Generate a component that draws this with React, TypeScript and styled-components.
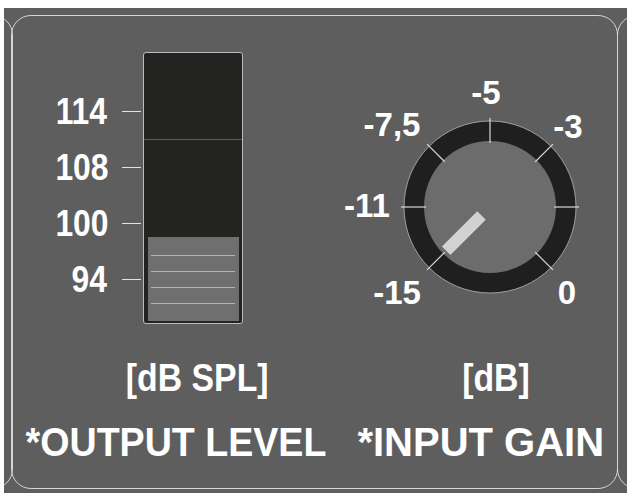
import React from "react";
import styled, { createGlobalStyle } from "styled-components";

const Global = createGlobalStyle`
  html, body { margin: 0; padding: 0; background: #ffffff; }
  body { width: 633px; height: 499px; overflow: hidden; }
  #root { width: 633px; height: 499px; }
`;

const FONT = `"Liberation Sans", Arial, sans-serif`;

const Frame = styled.div`
  box-sizing: border-box;
  margin: 8px 0 0 4px;
  width: 623px;
  height: 485px;
  background: #5e5e5e;
  overflow: hidden;
  display: flex;
  align-items: flex-start;
  padding-top: 7px;
`;

const PanelShell = styled.div<{ $w: number; $ml: number }>`
  box-sizing: border-box;
  flex: 0 0 auto;
  width: ${(p) => p.$w}px;
  height: 474px;
  margin-left: ${(p) => p.$ml}px;
  border: 1.5px solid #d6d6d6;
  border-radius: 20px;
`;

const MainPanel = styled(PanelShell)`
  display: grid;
  grid-template-columns: 327.5px 276.5px;
  grid-template-rows: 272px auto auto;
  padding-top: 35.5px;
  color: #ffffff;
  font-family: ${FONT};
  font-weight: 700;
`;

const Cell = styled.div<{ $col: number; $row: number; $shift?: number; $mt?: number }>`
  grid-column: ${(p) => p.$col};
  grid-row: ${(p) => p.$row};
  min-width: 0;
  display: flex;
  justify-content: center;
  margin-top: ${(p) => p.$mt ?? 0}px;
  padding-left: ${(p) => Math.max(0, (p.$shift ?? 0) * 2)}px;
  padding-right: ${(p) => Math.max(0, -(p.$shift ?? 0) * 2)}px;
`;

const MeterArea = styled.div`
  grid-column: 1;
  grid-row: 1;
  display: flex;
  align-items: flex-start;
  padding-left: 34.5px;
`;

const Scale = styled.div`
  display: flex;
  flex-direction: column;
  margin-top: 32px;
`;

const ScaleRow = styled.div`
  height: 56px;
  display: flex;
  align-items: center;
`;

const ScaleLabel = styled.span`
  width: 60px;
  text-align: right;
  font-size: 37px;
  line-height: 1;
  transform: scaleX(0.86);
  transform-origin: right center;
`;

const Tick = styled.span`
  width: 19px;
  height: 1.5px;
  margin: 0 2px 0 15px;
  background: #e2e2e2;
`;

const MeterBox = styled.div`
  box-sizing: border-box;
  width: 100px;
  height: 272px;
  border: 1px solid #bcbcbc;
  border-radius: 3px;
  background: #232321;
  display: flex;
  flex-direction: column;
  padding: 0 3px 2px 4px;
`;

const MeterTop = styled.div`
  height: 86px;
  border-bottom: 1px solid #5a5a58;
  margin: 0 -3px 0 -4px;
`;

const MeterGap = styled.div`
  flex: 1;
`;

const LevelBar = styled.div`
  height: 84px;
  background: #6f6f6f;
  display: flex;
  flex-direction: column;
  gap: 15px;
  padding: 18px 4px 0 3px;
  box-sizing: border-box;
`;

const LevelLine = styled.div`
  height: 1px;
  background: #b4b4b4;
`;

const KnobArea = styled.div`
  grid-column: 2;
  grid-row: 1;
  display: flex;
  align-items: flex-start;
`;

const KnobLabel = styled.text`
  font-family: ${FONT};
  font-weight: 700;
  font-size: 33px;
  fill: #ffffff;
`;

const Unit = styled.span`
  font-size: 38px;
  line-height: 1;
  white-space: nowrap;
  transform: scaleX(0.89);
`;

const Title = styled.span<{ $sx: number }>`
  font-size: 40px;
  line-height: 1;
  white-space: nowrap;
  transform: scaleX(${(p) => p.$sx});
`;

const deg = (a: number) => (a * Math.PI) / 180;
const pt = (cx: number, cy: number, r: number, a: number) => [
  cx + r * Math.cos(deg(a)),
  cy - r * Math.sin(deg(a)),
];

function Knob() {
  const cx = 150;
  const cy = 155;
  const ticks = [90, 45, 0, 135, 180, 225, 315];
  const labels: [string, number, number][] = [
    ["-5", 146, 40],
    ["-3", 228, 74],
    ["-7,5", 52, 72],
    ["-11", 27, 153],
    ["-15", 57, 240],
    ["0", 227, 240],
  ];
  const [ix1, iy1] = pt(cx, cy, 12, 225);
  const [ix2, iy2] = pt(cx, cy, 62, 225);
  return (
    <svg width="260" height="272" viewBox="0 0 260 272">
      <circle cx={cx} cy={cy} r={86} fill="#1f1f1f" />
      <circle cx={cx} cy={cy} r={86} fill="none" stroke="#bdbdbd" strokeWidth={1} opacity={0.75} />
      <circle cx={cx} cy={cy} r={66} fill="#6c6c6c" />
      {ticks.map((a) => {
        const [x1, y1] = pt(cx, cy, 64, a);
        const [x2, y2] = pt(cx, cy, 89, a);
        return <line key={a} x1={x1} y1={y1} x2={x2} y2={y2} stroke="#d8d8d8" strokeWidth={1.2} />;
      })}
      <line x1={ix1} y1={iy1} x2={ix2} y2={iy2} stroke="#d2d2d2" strokeWidth={12} />
      {labels.map(([t, x, y]) => (
        <KnobLabel key={t} x={x} y={y} textAnchor="middle" dominantBaseline="central">
          {t}
        </KnobLabel>
      ))}
    </svg>
  );
}

export default function App() {
  const scale = ["114", "108", "100", "94"];
  return (
    <>
      <Global />
      <Frame>
        <PanelShell $w={101.5} $ml={-93} />
        <MainPanel $w={607} $ml={-1.5}>
          <MeterArea>
            <Scale>
              {scale.map((s) => (
                <ScaleRow key={s}>
                  <ScaleLabel>{s}</ScaleLabel>
                  <Tick />
                </ScaleRow>
              ))}
            </Scale>
            <MeterBox>
              <MeterTop />
              <MeterGap />
              <LevelBar>
                <LevelLine />
                <LevelLine />
                <LevelLine />
                <LevelLine />
              </LevelBar>
            </MeterBox>
          </MeterArea>
          <KnobArea>
            <Knob />
          </KnobArea>
          <Cell $col={1} $row={2} $shift={21.5} $mt={35.5}>
            <Unit>[dB SPL]</Unit>
          </Cell>
          <Cell $col={2} $row={2} $shift={18} $mt={35.5}>
            <Unit>[dB]</Unit>
          </Cell>
          <Cell $col={1} $row={3} $shift={0} $mt={-1}>
            <Title $sx={0.94}>*OUTPUT LEVEL</Title>
          </Cell>
          <Cell $col={2} $row={3} $shift={3} $mt={-1}>
            <Title $sx={1}>*INPUT GAIN</Title>
          </Cell>
        </MainPanel>
        <PanelShell $w={100} $ml={-1.5} />
      </Frame>
    </>
  );
}
